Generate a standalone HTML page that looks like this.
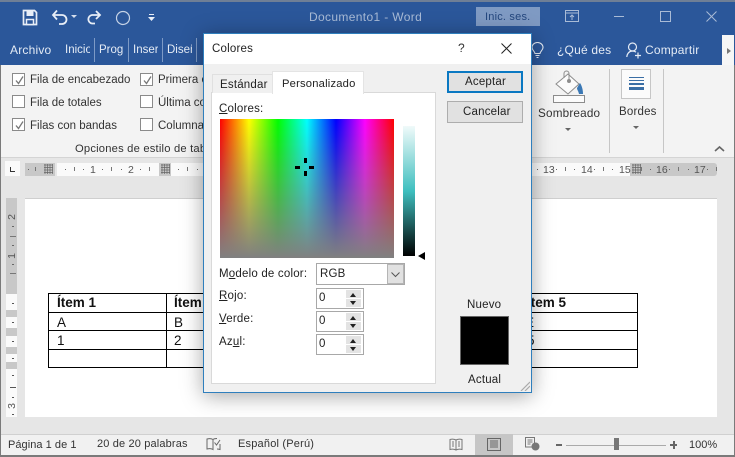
<!DOCTYPE html>
<html><head><meta charset="utf-8"><style>
html,body{margin:0;padding:0;background:#fff}
#r{position:relative;width:735px;height:457px;overflow:hidden;background:#e6e6e6;font-family:"Liberation Sans",sans-serif;font-size:12px;color:#333}
#r div,#r span.a,#r svg{position:absolute}
.t{white-space:nowrap;letter-spacing:.2px;line-height:14px}
.c{font-size:11.5px;letter-spacing:0}
.w{color:#e4ebf5}
.cb{width:11px;height:11px;border:1px solid #8a8a8a;background:#fff}
.cb svg{left:1px;top:1px}
.sep{width:1px;background:#7d9ac6}
.gs{width:1px;background:#c6c6c6}
.rn{font-size:10.5px;color:#555;white-space:nowrap;line-height:12px}
.k{width:1px;height:1px;background:#666;top:169px}
.l{width:1px;height:4px;background:#777;top:167px}
.cell{font-family:"Liberation Sans",sans-serif;font-size:13.5px;color:#111;white-space:nowrap;line-height:15px}
.tb{background:#000}
.d{color:#222;white-space:nowrap;letter-spacing:.2px;line-height:14px;font-size:11.5px}
.spin{width:46px;height:19px;border:1px solid #a8a8a8;background:#fff}
.spb{left:29px;top:1px;width:15px;height:17px;background:#e3e3e3}
.up{left:4px;top:3px;width:0;height:0;border:3.5px solid transparent;border-top:0;border-bottom:4px solid #222}
.dn{left:4px;top:11px;width:0;height:0;border:3.5px solid transparent;border-bottom:0;border-top:4px solid #222}
.ln{left:0;top:8px;width:15px;height:1px;background:#fff}
u{text-decoration:underline}
</style></head><body><div id="r">

<!-- title + tab band -->
<div style="left:0;top:0;width:735px;height:65px;background:#2b579a"></div>
<div style="left:0;top:0;width:735px;height:2px;background:#6f7f96"></div>
<svg style="left:22px;top:9px" width="16" height="17" viewBox="0 0 16 17"><path d="M1.500 1.500h11l2 2v12h-13z" fill="none" stroke="#e8eef7" stroke-width="1.700"/><rect x="4.500" y="2" width="7" height="5" fill="#e8eef7"/><rect x="4.500" y="10.500" width="7" height="5" fill="#2b579a" stroke="#e8eef7" stroke-width="1.500"/></svg>
<svg style="left:51px;top:9px" width="26" height="16" viewBox="0 0 26 16"><path d="M2 6h9a4.500 4.500 0 0 1 0 9H8" fill="none" stroke="#e8eef7" stroke-width="1.800"/><path d="M6 1.500 2 6l4 4.500" fill="none" stroke="#e8eef7" stroke-width="1.800"/><path d="M20 6h6l-3 3z" fill="#d5deec"/></svg>
<svg style="left:86px;top:10px" width="16" height="15" viewBox="0 0 16 15"><path d="M14 5H6a4.300 4.300 0 0 0 0 8.500h3" fill="none" stroke="#e8eef7" stroke-width="1.800"/><path d="M10 1l4 4-4 4" fill="none" stroke="#e8eef7" stroke-width="1.800"/></svg>
<svg style="left:115px;top:10px" width="16" height="16" viewBox="0 0 16 16"><circle cx="8" cy="8" r="6.500" fill="none" stroke="#c6d3e6" stroke-width="1.200"/></svg>
<svg style="left:148px;top:14px" width="7" height="8" viewBox="0 0 7 8"><rect x="1" y="0" width="5" height="1" fill="#e8eef7"/><path d="M0 3h7L3.500 7z" fill="#e8eef7"/></svg>
<div class="t" style="left:309px;top:10px;color:#a9bbd6;font-size:12px;letter-spacing:.35px">Documento1 - Word</div>
<div style="left:476px;top:7px;width:64px;height:19px;background:#7f9ac3"></div>
<div class="t" style="left:485px;top:10px;color:#24477e;font-size:11px">Inic. ses.</div>
<svg style="left:565px;top:10px" width="14" height="12" viewBox="0 0 14 12"><rect x=".5" y=".5" width="13" height="11" fill="none" stroke="#a9bbd6"/><path d="M1 3h12M7 10V5M5 7l2-2 2 2" fill="none" stroke="#a9bbd6"/></svg>
<div style="left:614px;top:16px;width:10px;height:1px;background:#a9bbd6"></div>
<div style="left:660px;top:11px;width:9px;height:9px;border:1px solid #a9bbd6"></div>
<svg style="left:706px;top:11px" width="11" height="11" viewBox="0 0 11 11"><path d="M.5.500l10 10M10.500.500l-10 10" stroke="#a9bbd6"/></svg>

<div class="t w" style="left:10px;top:43px">Archivo</div>
<div class="t w c" style="left:65px;top:43px;width:25px;overflow:hidden">Inicio</div>
<div class="t w c" style="left:99px;top:43px;width:25px;overflow:hidden">Prog</div>
<div class="t w c" style="left:133px;top:43px;width:25px;overflow:hidden">Inser</div>
<div class="t w c" style="left:167px;top:43px;width:25px;overflow:hidden">Diseño</div>
<div class="sep" style="left:94px;top:38px;height:24px"></div>
<div class="sep" style="left:128px;top:38px;height:24px"></div>
<div class="sep" style="left:162px;top:38px;height:24px"></div>
<div class="sep" style="left:196px;top:38px;height:24px"></div>
<svg style="left:531px;top:42px" width="13" height="17" viewBox="0 0 13 17"><path d="M4 11.500C3.500 9 1 8 1 5.500a5.500 5 0 0 1 11 0C12 8 9.500 9 9 11.500zM4.500 13.500h4M5.500 15.500h2" fill="none" stroke="#e4ebf5" stroke-width="1.100"/></svg>
<div class="t w" style="left:557px;top:43px">¿Qué des</div>
<svg style="left:626px;top:42px" width="16" height="17" viewBox="0 0 16 17"><circle cx="6.500" cy="5" r="4" fill="none" stroke="#e4ebf5" stroke-width="1.200"/><path d="M.8 15c.3-3.500 2.500-6 5.700-6 1.500 0 2.500.4 3.500 1.200M12 10.500v6M9 13.500h6" fill="none" stroke="#e4ebf5" stroke-width="1.200"/></svg>
<div class="t w" style="left:645px;top:43px">Compartir</div>
<div style="left:722px;top:35px;width:12px;height:30px;background:#f6f6f6"></div>
<div style="left:727px;top:48px;width:0;height:0;border:3px solid transparent;border-left:4px solid #777;border-right:0"></div>

<!-- ribbon -->
<div style="left:0;top:65px;width:735px;height:93px;background:#f3f3f3"></div>
<div style="left:0;top:157px;width:735px;height:1px;background:#d4d4d4"></div>

<div class="cb" style="left:12px;top:73px"><svg width="11" height="11" viewBox="0 0 11 11"><path d="M2 5.500l2.500 3L9 1.500" fill="none" stroke="#777" stroke-width="1.300"/></svg></div>
<div class="t c" style="left:30px;top:73px">Fila de encabezado</div>
<div class="cb" style="left:12px;top:95px"></div>
<div class="t c" style="left:30px;top:96px">Fila de totales</div>
<div class="cb" style="left:12px;top:118px"><svg width="11" height="11" viewBox="0 0 11 11"><path d="M2 5.500l2.500 3L9 1.500" fill="none" stroke="#777" stroke-width="1.300"/></svg></div>
<div class="t c" style="left:30px;top:119px">Filas con bandas</div>
<div class="cb" style="left:140px;top:73px"><svg width="11" height="11" viewBox="0 0 11 11"><path d="M2 5.500l2.500 3L9 1.500" fill="none" stroke="#777" stroke-width="1.300"/></svg></div>
<div class="t c" style="left:158px;top:73px">Primera columna</div>
<div class="cb" style="left:140px;top:95px"></div>
<div class="t c" style="left:158px;top:96px">Última columna</div>
<div class="cb" style="left:140px;top:118px"></div>
<div class="t c" style="left:158px;top:119px">Columnas con bandas</div>
<div class="t" style="left:75px;top:142px;font-size:11.200px">Opciones de estilo de tabla</div>

<svg style="left:552px;top:70px" width="36" height="34" viewBox="0 0 36 34"><rect x="1.500" y="25.500" width="31" height="7" fill="#fbfbfb" stroke="#8c8c8c"/><path d="M4 14 16 4l11 10-11 10z" fill="#fbfbfb" stroke="#8c8c8c"/><path d="M12 8V3.500a2.500 2.500 0 0 1 5 0V10" fill="none" stroke="#8c8c8c"/><circle cx="17" cy="11" r="2" fill="#8c8c8c"/><path d="M28 13c2 3 3 7 3 11h-4c-.5-3-2-4-2-6z" fill="#3a78b5"/></svg>
<div class="t" style="left:538px;top:107px;font-size:11.700px">Sombreado</div>
<div style="left:565px;top:128px;width:0;height:0;border:3px solid transparent;border-top:3px solid #666;border-bottom:0"></div>
<div class="gs" style="left:609px;top:69px;height:84px"></div>
<div style="left:621px;top:69px;width:28px;height:28px;border:1px solid #c6c6c6;background:#fbfbfb"></div>
<div style="left:629px;top:77px;width:15px;height:1px;background:#3a6ea5"></div>
<div style="left:629px;top:80px;width:15px;height:1px;background:#3a6ea5"></div>
<div style="left:629px;top:83px;width:15px;height:2px;background:#3a6ea5"></div>
<div style="left:629px;top:87px;width:15px;height:3px;background:#3a6ea5"></div>
<div class="t" style="left:619px;top:105px;font-size:11.500px">Bordes</div>
<div style="left:633px;top:126px;width:0;height:0;border:3px solid transparent;border-top:3px solid #666;border-bottom:0"></div>
<div class="gs" style="left:663px;top:69px;height:84px"></div>
<svg style="left:714px;top:145px" width="11" height="7" viewBox="0 0 11 7"><path d="M1 6l4.500-4L10 6" fill="none" stroke="#666" stroke-width="1.600"/></svg>

<!-- h ruler -->
<div style="left:5px;top:161px;width:15px;height:15px;background:#fafafa"></div>
<div style="left:10px;top:167px;width:1px;height:5px;background:#333"></div>
<div style="left:10px;top:171px;width:5px;height:1px;background:#333"></div>
<div style="left:25px;top:163px;width:30px;height:13px;background:#c8c8c8"></div>
<div style="left:57px;top:163px;width:102px;height:13px;background:#fafafa"></div>
<div style="left:159px;top:163px;width:12px;height:13px;background:#c8c8c8"></div>
<div style="left:171px;top:163px;width:459px;height:13px;background:#fafafa"></div>
<div style="left:630px;top:163px;width:87px;height:13px;background:#c8c8c8;border-radius:0 3px 3px 0"></div>
<!-- grid marks -->
<svg style="left:44px;top:164px" width="9" height="10" viewBox="0 0 9 10"><path d="M0 1h9M0 3.500h9M0 6h9M0 8.500h9M1 0v10M3.500 0v10M6 0v10M8.500 0v10" stroke="#666" stroke-width=".7"/></svg>
<svg style="left:161px;top:164px" width="9" height="10" viewBox="0 0 9 10"><path d="M0 1h9M0 3.500h9M0 6h9M0 8.500h9M1 0v10M3.500 0v10M6 0v10M8.500 0v10" stroke="#666" stroke-width=".7"/></svg>
<svg style="left:632px;top:164px" width="9" height="10" viewBox="0 0 9 10"><path d="M0 1h9M0 3.500h9M0 6h9M0 8.500h9M1 0v10M3.500 0v10M6 0v10M8.500 0v10" stroke="#666" stroke-width=".7"/></svg>
<div class="k" style="left:28px"></div><div class="l" style="left:35px"></div>
<div class="k" style="left:65px"></div><div class="l" style="left:74px"></div><div class="k" style="left:83px"></div>
<div class="k" style="left:102px"></div><div class="l" style="left:111px"></div><div class="k" style="left:121px"></div>
<div class="k" style="left:140px"></div><div class="l" style="left:149px"></div>
<div class="k" style="left:178px"></div><div class="l" style="left:187px"></div><div class="k" style="left:197px"></div>
<div class="rn" style="left:90px;top:164px">1</div>
<div class="rn" style="left:128px;top:164px">2</div>
<div class="k" style="left:537px"></div><div class="k" style="left:556px"></div><div class="l" style="left:565px"></div><div class="k" style="left:574px"></div>
<div class="k" style="left:594px"></div><div class="l" style="left:603px"></div><div class="k" style="left:612px"></div>
<div class="l" style="left:641px"></div><div class="k" style="left:650px"></div>
<div class="k" style="left:669px"></div><div class="l" style="left:678px"></div><div class="k" style="left:688px"></div>
<div class="k" style="left:707px"></div><div class="l" style="left:716px"></div>
<div class="rn" style="left:543px;top:164px">13</div>
<div class="rn" style="left:581px;top:164px">14</div>
<div class="rn" style="left:619px;top:164px">15</div>
<div class="rn" style="left:656px;top:164px">16</div>
<div class="rn" style="left:694px;top:164px">17</div>

<!-- v ruler -->
<div style="left:6px;top:198px;width:11px;height:96px;background:#c8c8c8"></div>
<div style="left:6px;top:294px;width:11px;height:123px;background:#fafafa"></div>
<div style="left:6px;top:310px;width:11px;height:7px;background:#c8c8c8"></div>
<div style="left:6px;top:328px;width:11px;height:8px;background:#c8c8c8"></div>
<div style="left:6px;top:347px;width:11px;height:7px;background:#c8c8c8"></div>
<div style="left:6px;top:362px;width:11px;height:7px;background:#c8c8c8"></div>
<div class="rn" style="left:9px;top:211px;transform:rotate(-90deg)">2</div>
<div class="rn" style="left:9px;top:250px;transform:rotate(-90deg)">1</div>
<div class="rn" style="left:9px;top:400px;transform:rotate(-90deg)">3</div>
<div style="left:12px;top:226px;width:2px;height:1px;background:#666"></div>
<div style="left:10px;top:236px;width:6px;height:1px;background:#777"></div>
<div style="left:12px;top:245px;width:2px;height:1px;background:#666"></div>
<div style="left:12px;top:264px;width:2px;height:1px;background:#666"></div>
<div style="left:10px;top:273px;width:6px;height:1px;background:#777"></div>
<div style="left:12px;top:303px;width:2px;height:1px;background:#555"></div>
<div style="left:12px;top:322px;width:2px;height:1px;background:#555"></div>
<div style="left:12px;top:341px;width:2px;height:1px;background:#555"></div>
<div style="left:12px;top:358px;width:2px;height:1px;background:#555"></div>
<div style="left:12px;top:375px;width:2px;height:1px;background:#555"></div>
<div style="left:10px;top:387px;width:6px;height:1px;background:#555"></div>
<div style="left:12px;top:397px;width:2px;height:1px;background:#555"></div>
<div style="left:12px;top:414px;width:2px;height:1px;background:#555"></div>

<!-- page -->
<div style="left:25px;top:199px;width:692px;height:218px;background:#fff;box-shadow:0 -1px 0 #cfcfcf"></div>
<!-- table -->
<div class="tb" style="left:48px;top:293px;width:590px;height:1px"></div>
<div class="tb" style="left:48px;top:312px;width:590px;height:1px"></div>
<div class="tb" style="left:48px;top:330px;width:590px;height:1px"></div>
<div class="tb" style="left:48px;top:349px;width:590px;height:1px"></div>
<div class="tb" style="left:48px;top:367px;width:590px;height:1px"></div>
<div class="tb" style="left:48px;top:293px;width:1px;height:75px"></div>
<div class="tb" style="left:166px;top:293px;width:1px;height:75px"></div>
<div class="tb" style="left:637px;top:293px;width:1px;height:75px"></div>
<div class="cell" style="left:57px;top:295px;font-weight:bold">Ítem 1</div>
<div class="cell" style="left:174px;top:295px;font-weight:bold">Ítem 2</div>
<div class="cell" style="left:57px;top:315px">A</div>
<div class="cell" style="left:174px;top:315px">B</div>
<div class="cell" style="left:57px;top:333px">1</div>
<div class="cell" style="left:174px;top:333px">2</div>
<div class="cell" style="left:527px;top:295px;font-weight:bold">Ítem 5</div>
<div class="cell" style="left:525px;top:315px">E</div>
<div class="cell" style="left:527px;top:333px">5</div>

<!-- status bar -->
<div style="left:0;top:434px;width:735px;height:21px;background:#f1f1f1;border-top:1px solid #d0d0d0;box-sizing:border-box"></div>
<div style="left:0;top:455px;width:735px;height:2px;background:#7a7a7a"></div>
<div style="left:0;top:65px;width:1px;height:392px;background:#7a7a7a"></div>
<div style="left:734px;top:65px;width:1px;height:392px;background:#7a7a7a"></div>
<div class="t" style="left:8px;top:438px;font-size:11px;letter-spacing:.05px">Página 1 de 1</div>
<div class="t" style="left:97px;top:437px;font-size:11px;letter-spacing:.15px">20 de 20 palabras</div>
<svg style="left:206px;top:437px" width="15" height="14" viewBox="0 0 15 14"><path d="M7 2.500C5.500 1.500 3 1.500 1 2v10c2-.5 4.500-.5 6 .5zM7 12.500V2.500c1-.8 2.500-1 4-1M11 12c1 0 2 .2 3 .5V7" fill="none" stroke="#666"/><path d="M8.500 5.500l2 2.500 3.500-5" fill="none" stroke="#666"/></svg>
<div class="t" style="left:238px;top:437px;font-size:11px">Español (Perú)</div>
<svg style="left:449px;top:438px" width="14" height="13" viewBox="0 0 14 13"><path d="M7 2C5 1 3 1 1 1.500v10c2-.5 4-.5 6 .5 2-1 4-1 6-.5v-10C11 1 9 1 7 2zM7 2v10M3 4h2M3 6h2M3 8h2M9 4h2M9 6h2M9 8h2" fill="none" stroke="#777"/></svg>
<div style="left:475px;top:434px;width:38px;height:21px;background:#c6c6c6"></div>
<svg style="left:487px;top:438px" width="14" height="13" viewBox="0 0 14 13"><path d="M.5.500h13v12H.5zM3 3h8M3 5h8M3 7h8M3 9h8" fill="none" stroke="#666"/></svg>
<svg style="left:525px;top:437px" width="15" height="14" viewBox="0 0 15 14"><path d="M8 10H.5V.5h9V6M2.500 3h5M2.500 5h5M2.500 7h3" fill="none" stroke="#777"/><circle cx="10.500" cy="9.500" r="4" fill="#777"/></svg>
<div style="left:556px;top:444px;width:6px;height:2px;background:#666"></div>
<div style="left:566px;top:445px;width:100px;height:1px;background:#aaa"></div>
<div style="left:614px;top:438px;width:5px;height:12px;background:#777"></div>
<div style="left:670px;top:444px;width:7px;height:2px;background:#666"></div>
<div style="left:673px;top:441px;width:2px;height:8px;background:#666"></div>
<div class="t" style="left:689px;top:438px;font-size:11px;letter-spacing:0">100%</div>

<!-- dialog -->
<div style="left:203px;top:33px;width:329px;height:360px;background:#f0f0f0;box-shadow:0 3px 20px rgba(0,0,0,.35);border:1px solid #2f7fbd;box-sizing:border-box"></div>
<div style="left:204px;top:34px;width:327px;height:30px;background:#fff"></div>
<div class="t" style="left:212px;top:42px;font-size:11.500px;color:#222">Colores</div>
<div class="t" style="left:458px;top:41px;color:#333">?</div>
<svg style="left:501px;top:43px" width="11" height="11" viewBox="0 0 11 11"><path d="M.5.500l10 10M10.500.500l-10 10" stroke="#222"/></svg>

<div style="left:211px;top:92px;width:225px;height:292px;background:#fff;border:1px solid #d9d9d9;box-sizing:border-box"></div>
<div style="left:272px;top:71px;width:92px;height:23px;background:#fff;border:1px solid #e4e4e4;border-bottom:0;box-sizing:border-box"></div>
<div style="left:212px;top:74px;width:60px;height:19px;background:#f0f0f0;border:1px solid #e0e0e0;border-bottom:0;border-right:0;box-sizing:border-box"></div>
<div class="d" style="left:220px;top:78px">Estándar</div>
<div class="d" style="left:282px;top:77px;font-size:11.200px">Personalizado</div>
<div class="d" style="left:219px;top:102px"><u>C</u>olores:</div>

<div style="left:220px;top:119px;width:174px;height:139px;background:linear-gradient(to bottom,rgba(128,128,128,0),#808080),linear-gradient(to right,#f00 0%,#ff0 16.67%,#0f0 33.33%,#0ff 50%,#00f 66.67%,#f0f 83.33%,#f00 100%)"></div>
<div style="left:304px;top:158px;width:3px;height:5px;background:#000"></div>
<div style="left:304px;top:171px;width:3px;height:5px;background:#000"></div>
<div style="left:295px;top:166px;width:5px;height:3px;background:#000"></div>
<div style="left:309px;top:166px;width:5px;height:3px;background:#000"></div>

<div style="left:403px;top:126px;width:12px;height:130px;background:linear-gradient(to bottom,#f0fafa 0%,#3fbfbf 50%,#000 100%)"></div>
<div style="left:418px;top:252px;width:0;height:0;border:4.500px solid transparent;border-right:7px solid #000;border-left:0"></div>

<div class="d" style="left:219px;top:267px">M<u>o</u>delo de color:</div>
<div style="left:316px;top:263px;width:89px;height:22px;border:1px solid #a8a8a8;background:#fff;box-sizing:border-box"></div>
<div style="left:387px;top:264px;width:17px;height:20px;background:#e1e1e1;border:1px solid #b5b5b5;box-sizing:border-box"></div>
<svg style="left:391px;top:272px" width="9" height="6" viewBox="0 0 9 6"><path d="M.5.500l4 4 4-4" fill="none" stroke="#555"/></svg>
<div class="d" style="left:320px;top:267px">RGB</div>

<div class="d" style="left:219px;top:289px"><u>R</u>ojo:</div>
<div class="d" style="left:219px;top:312px"><u>V</u>erde:</div>
<div class="d" style="left:219px;top:335px">Az<u>u</u>l:</div>

<div class="spin" style="left:316px;top:288px"><div class="spb"><div class="up"></div><div class="ln"></div><div class="dn"></div></div></div>
<div class="spin" style="left:316px;top:311px"><div class="spb"><div class="up"></div><div class="ln"></div><div class="dn"></div></div></div>
<div class="spin" style="left:316px;top:334px"><div class="spb"><div class="up"></div><div class="ln"></div><div class="dn"></div></div></div>
<div class="d" style="left:319px;top:291px">0</div>
<div class="d" style="left:319px;top:314px">0</div>
<div class="d" style="left:319px;top:337px">0</div>

<div style="left:447px;top:71px;width:76px;height:22px;background:#e1e1e1;border:2px solid #0a78c2;box-sizing:border-box"></div>
<div class="d" style="left:465px;top:75px">Aceptar</div>
<div style="left:447px;top:101px;width:76px;height:22px;background:#e1e1e1;border:1px solid #adadad;box-sizing:border-box"></div>
<div class="d" style="left:463px;top:105px">Cancelar</div>

<div class="d" style="left:467px;top:298px">Nuevo</div>
<div style="left:460px;top:316px;width:49px;height:49px;background:#000;border:1px solid #666;box-sizing:border-box"></div>
<div class="d" style="left:468px;top:373px">Actual</div>
<svg style="left:520px;top:381px" width="10" height="10" viewBox="0 0 10 10"><path d="M1 10l9-9M5 10l5-5" stroke="#aaa" stroke-width="1.200"/></svg>
</div></body></html>
